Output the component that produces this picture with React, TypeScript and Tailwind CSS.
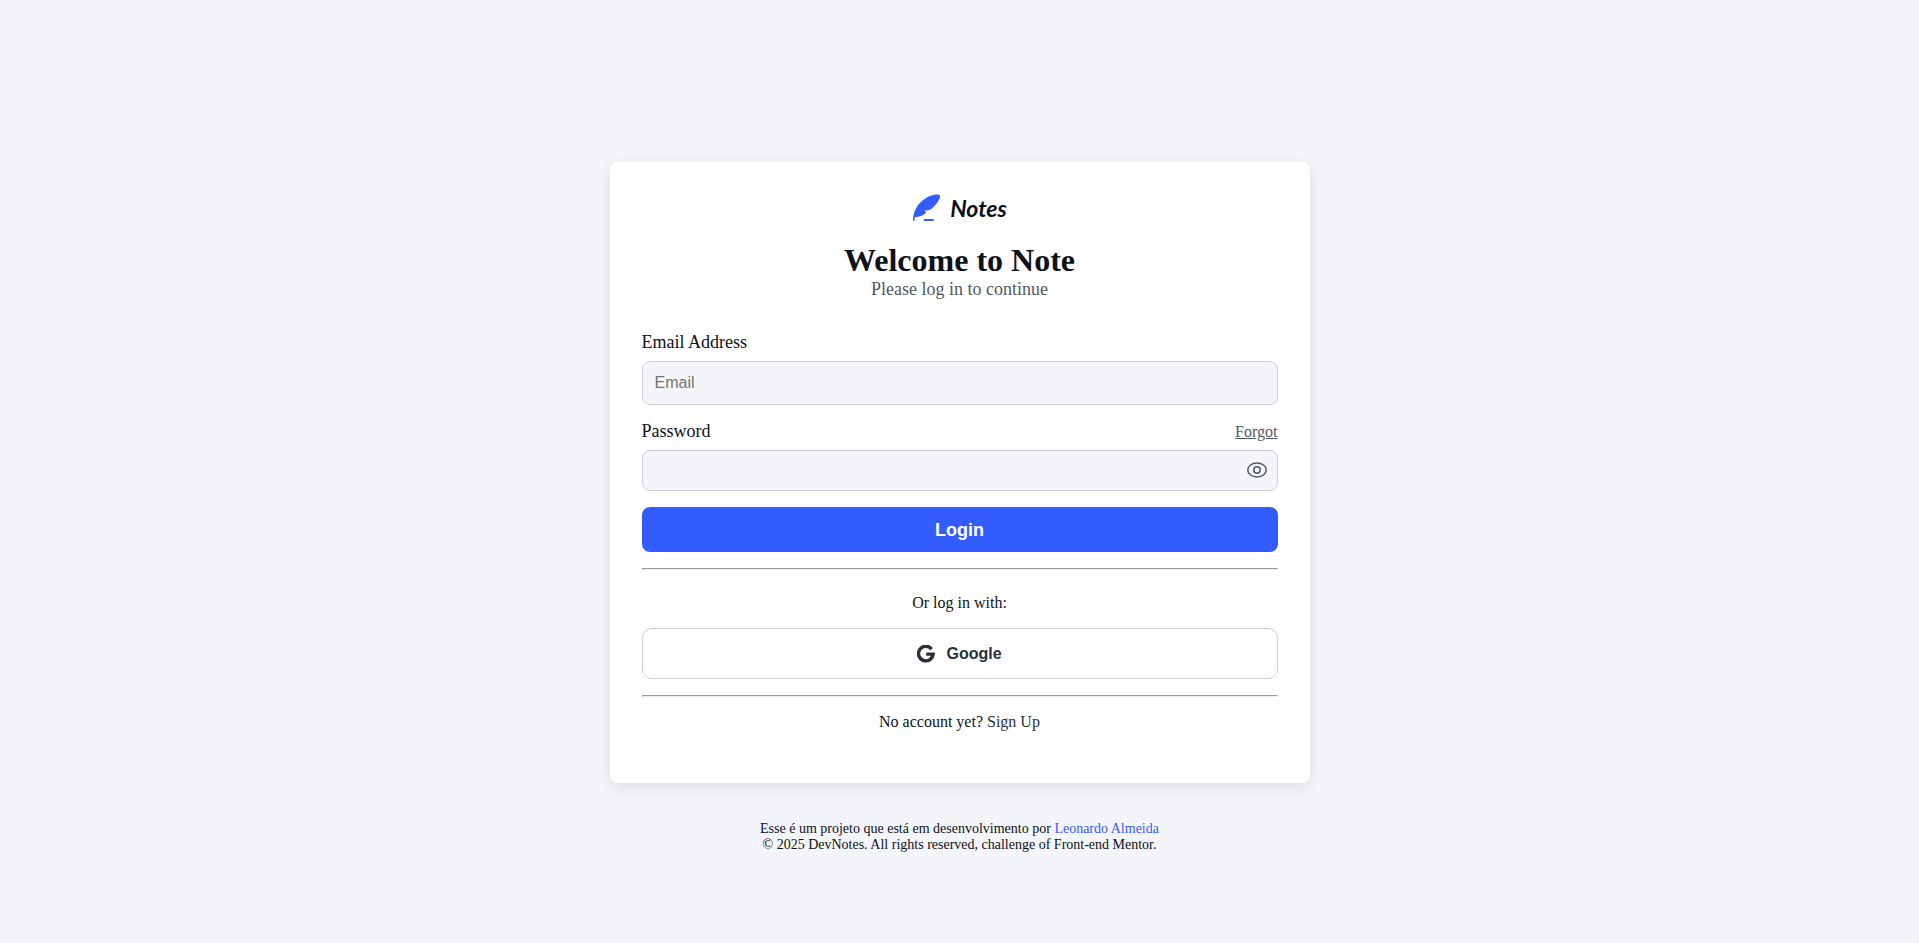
import { useState } from "react";

function Logo() {
  return (
    <div className="flex h-7 items-center justify-center gap-[9px]">
      <svg width="29" height="28" viewBox="0 0 29 28" aria-hidden="true">
        <path
          fill="#335CFF"
          d="M1 26.3C1 22 2 17.500 4.600 13.400C8 7.500 14 2.600 21.500 0.900C24.500 0.300 27.200 0.400 27.800 1.200C28.600 2.300 27.600 5 25.800 7.700C23.800 10.600 21 13.500 18.500 15.500C16.500 16.400 14.500 16.600 12.300 16.600L14 18.100C14.300 18.400 14.200 18.800 13.900 19.100C11 21.600 7.200 23.200 2.900 23.200C2.700 24.300 2.600 25.300 2.600 26.300C2.600 27.400 1 27.400 1 26.300Z"
        />
        <path stroke="#335CFF" strokeWidth="2" strokeLinecap="round" d="M12.500 26H21" />
      </svg>
      <span className="font-['Lato',sans-serif] text-[23px] leading-7 font-bold italic">Notes</span>
    </div>
  );
}

function EyeIcon() {
  return (
    <svg width="24" height="24" viewBox="0 0 24 24" fill="none" stroke="#525866" strokeWidth="1.500" aria-hidden="true">
      <path d="M2.750 12C2.750 7.900 7 5.100 12 5.100S21.250 7.900 21.250 12S17 18.900 12 18.900S2.750 16.100 2.750 12Z" />
      <circle cx="12" cy="12" r="3.200" />
    </svg>
  );
}

function GoogleIcon() {
  return (
    <svg width="18" height="18" viewBox="0 0 18 18" fill="none" stroke="#2B303B" strokeWidth="3.400" aria-hidden="true">
      <path d="M14.600 4.100A7.300 7.300 0 1 0 16.100 9.100H9.200" />
    </svg>
  );
}

function Divider() {
  return <hr className="h-[2px] border border-t-[#9a9a9a] border-r-[#eeeeee] border-b-[#eeeeee] border-l-[#9a9a9a]" />;
}

export default function App() {
  const [visible, setVisible] = useState(false);

  return (
    <div className="flex min-h-screen flex-col items-center justify-center bg-[#F3F5F8] pt-18 font-['Liberation_Serif',serif] text-[#0E121B]">
      <main className="w-full max-w-[700px] rounded-lg bg-white px-8 pt-8 pb-[52px] shadow-[0_4px_16px_rgba(0,0,0,0.1)]">
        <header className="flex flex-col items-center">
          <Logo />
          <h1 className="mt-5 text-[32px] leading-[37px] font-bold">Welcome to Note</h1>
          <p className="text-lg leading-[21px] text-[#525866]">Please log in to continue</p>
        </header>

        <form className="mt-8 flex flex-col gap-4" onSubmit={(e) => e.preventDefault()}>
          <div className="flex flex-col gap-2">
            <label htmlFor="email" className="text-lg leading-[21px]">
              Email Address
            </label>
            <input
              id="email"
              type="email"
              placeholder="Email"
              className="h-11 w-full rounded-lg border border-[#CACFD8] bg-[#F3F5F8] px-3 font-['Liberation_Sans',sans-serif] text-base placeholder:text-[#757575]"
            />
          </div>

          <div className="flex flex-col gap-2">
            <div className="flex items-center justify-between">
              <label htmlFor="password" className="text-lg leading-[21px]">
                Password
              </label>
              <a href="#forgot" className="text-base leading-[18px] text-[#525866] underline">
                Forgot
              </a>
            </div>
            <div className="flex h-[41px] items-center rounded-lg border border-[#CACFD8] bg-[#F3F5F8] pr-2">
              <input
                id="password"
                type={visible ? "text" : "password"}
                className="h-full min-w-0 flex-1 bg-transparent px-3 font-['Liberation_Sans',sans-serif] text-base outline-none"
              />
              <button type="button" aria-label="Show password" className="pb-0.5" onClick={() => setVisible(!visible)}>
                <EyeIcon />
              </button>
            </div>
          </div>

          <button
            type="submit"
            className="h-[45px] rounded-lg bg-[#335CFF] font-['Liberation_Sans',sans-serif] text-lg font-bold text-white"
          >
            Login
          </button>
        </form>

        <div className="mt-4 flex flex-col gap-4">
          <Divider />
          <p className="mt-2 text-center text-base leading-[18px]">Or log in with:</p>
          <button
            type="button"
            className="flex h-[51px] items-center justify-center gap-[11px] rounded-[10px] border border-[#CACFD8] bg-white font-['Liberation_Sans',sans-serif] text-base font-bold text-[#2B303B]"
          >
            <GoogleIcon />
            Google
          </button>
          <Divider />
          <p className="text-center text-base leading-[18px]">
            No account yet?{" "}
            <a href="#signup" className="text-[#2B303B]">
              Sign Up
            </a>
          </p>
        </div>
      </main>

      <footer className="mt-[38px] text-center text-sm leading-4">
        <p>
          Esse é um projeto que está em desenvolvimento por{" "}
          <a href="#author" className="text-[#335CFF]">
            Leonardo Almeida
          </a>
        </p>
        <p>© 2025 DevNotes. All rights reserved, challenge of Front-end Mentor.</p>
      </footer>
    </div>
  );
}
